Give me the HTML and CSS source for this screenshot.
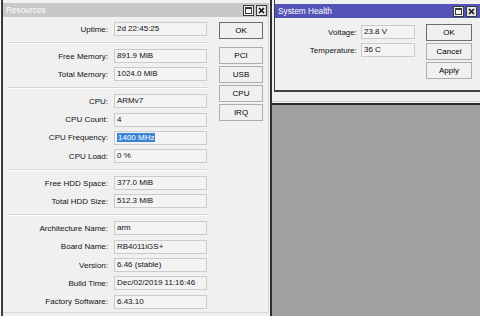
FILE: index.html
```html
<!DOCTYPE html>
<html>
<head>
<meta charset="utf-8">
<link rel="stylesheet" href="styles.css">
</head>
<body>
<div class="screen">
  <section class="win resources">
    <header class="titlebar inactive">
      <span class="title">Resources</span>
      <span class="ctrls">
        <svg class="cb" viewBox="0 0 11 11"><rect x=".5" y=".5" width="10" height="10" fill="#f4f4f4" stroke="#3a3a3a"/><rect x="2.5" y="2.5" width="6" height="6" fill="none" stroke="#3a3a3a"/><line x1="2" y1="3.5" x2="9" y2="3.5" stroke="#3a3a3a"/></svg>
        <svg class="cb" viewBox="0 0 11 11"><rect x=".5" y=".5" width="10" height="10" fill="#e6e6e6" stroke="#3a3a3a"/><path d="M3 3l5 5M8 3l-5 5" stroke="#111" stroke-width="1.6"/></svg>
      </span>
    </header>
    <div class="res-body">
      <div class="form">
        <div class="group">
          <div class="row"><label>Uptime:</label><span class="field">2d 22:45:25</span></div>
        </div>
        <div class="sep"></div>
        <div class="group">
          <div class="row"><label>Free Memory:</label><span class="field">891.9 MiB</span></div>
          <div class="row"><label>Total Memory:</label><span class="field">1024.0 MiB</span></div>
        </div>
        <div class="sep"></div>
        <div class="group">
          <div class="row"><label>CPU:</label><span class="field">ARMv7</span></div>
          <div class="row"><label>CPU Count:</label><span class="field">4</span></div>
          <div class="row"><label>CPU Frequency:</label><span class="field"><span class="sel">1400 MHz</span></span></div>
          <div class="row"><label>CPU Load:</label><span class="field">0 %</span></div>
        </div>
        <div class="sep"></div>
        <div class="group">
          <div class="row"><label>Free HDD Space:</label><span class="field">377.0 MiB</span></div>
          <div class="row"><label>Total HDD Size:</label><span class="field">512.3 MiB</span></div>
        </div>
        <div class="sep"></div>
        <div class="group">
          <div class="row"><label>Architecture Name:</label><span class="field">arm</span></div>
          <div class="row"><label>Board Name:</label><span class="field">RB4011iGS+</span></div>
          <div class="row"><label>Version:</label><span class="field">6.46 (stable)</span></div>
          <div class="row"><label>Build Time:</label><span class="field">Dec/02/2019 11:16:46</span></div>
          <div class="row"><label>Factory Software:</label><span class="field">6.43.10</span></div>
        </div>
      </div>
      <div class="buttons">
        <button class="btn default">OK</button>
        <button class="btn">PCI</button>
        <button class="btn">USB</button>
        <button class="btn">CPU</button>
        <button class="btn">IRQ</button>
      </div>
    </div>
  </section>
  <div class="mdi">
    <div class="mdi-top">
      <section class="win health">
        <header class="titlebar active">
          <span class="title">System Health</span>
          <span class="ctrls">
            <svg class="cb" viewBox="0 0 11 11"><rect x=".5" y=".5" width="10" height="10" fill="#f4f4f4" stroke="#3a3a3a"/><rect x="2.5" y="2.5" width="6" height="6" fill="none" stroke="#3a3a3a"/><line x1="2" y1="3.5" x2="9" y2="3.5" stroke="#3a3a3a"/></svg>
            <svg class="cb" viewBox="0 0 11 11"><rect x=".5" y=".5" width="10" height="10" fill="#e6e6e6" stroke="#3a3a3a"/><path d="M3 3l5 5M8 3l-5 5" stroke="#111" stroke-width="1.6"/></svg>
          </span>
        </header>
        <div class="health-body">
          <div class="hform">
            <div class="row"><label class="hl">Voltage:</label><span class="field hf">23.8 V</span></div>
            <div class="row"><label class="hl">Temperature:</label><span class="field hf">36 C</span></div>
          </div>
          <div class="buttons hbuttons">
            <button class="btn default">OK</button>
            <button class="btn">Cancel</button>
            <button class="btn">Apply</button>
          </div>
        </div>
      </section>
    </div>
  </div>
</div>
</body>
</html>
```

FILE: styles.css
```css
body {
  margin: 0;
  background: #fff;
  font-family: "Liberation Sans", Arial, sans-serif;
  font-size: 8px;
  color: #111;
}
.screen {
  display: flex;
  width: 480px;
  height: 316px;
  overflow: hidden;
}
.resources {
  box-sizing: border-box;
  width: 271px;
  margin-left: 1px;
  height: 316px;
  border-left: 2px solid #3a3a3a;
  border-right: 2px solid #2e2e2e;
  background: #f0f0f0;
  display: flex;
  flex-direction: column;
  padding-top: 3px;
  padding-right: 1px;
}
.titlebar {
  flex: none;
  height: 14px;
  display: flex;
  align-items: center;
  justify-content: space-between;
  padding-left: 3px;
  padding-right: 2px;
  color: #fff;
  font-size: 8.3px;
}
.titlebar.inactive { background: #c8c8c8; }
.titlebar.active { background: #5454b8; }
.ctrls { display: flex; gap: 2px; }
.cb { width: 11px; height: 11px; display: block; }

.res-body {
  flex: 1;
  display: flex;
  align-items: flex-start;
  padding: 5px 5px 0 0;
  border-right: 1px solid #d9d9d9;
  border-bottom: 1px solid #d9d9d9;
  margin-bottom: 3px;
}
.form {
  width: 204px;
  display: flex;
  flex-direction: column;
}
.group {
  display: flex;
  flex-direction: column;
  gap: 4.3px;
}
.row {
  display: flex;
  align-items: center;
  height: 14px;
  gap: 6px;
}
.row label {
  width: 105px;
  text-align: right;
  white-space: nowrap;
}
.field {
  box-sizing: border-box;
  width: 93px;
  height: 14px;
  border: 1px solid #cbcbcb;
  background: #f3f3f3;
  padding-left: 2px;
  line-height: 12px;
  white-space: nowrap;
  overflow: hidden;
}
.sel {
  background: #3d84d6;
  color: #fff;
  padding: 0 1px;
}
.sep {
  height: 0;
  border-top: 1px solid #d6d6d6;
  border-bottom: 1px solid #fff;
  margin: 6px -1px 5px 5px;
}
.buttons {
  margin-left: 12px;
  width: 44px;
  display: flex;
  flex-direction: column;
  gap: 2px;
}
.btn {
  box-sizing: border-box;
  height: 17px;
  border: 1px solid #adadad;
  background: #f0f0f0;
  font: inherit;
  color: #000;
  padding: 0;
}
.btn.default {
  border-color: #6c6c6c;
  margin-bottom: 6px;
}

.mdi {
  flex: 1;
  display: flex;
  flex-direction: column;
  background: #a0a0a0;
}
.mdi-top {
  height: 103px;
  background: #f0f0f0;
  border-bottom: 2px solid #2a2a2a;
  box-shadow: inset 0 -1px 0 #f0f0f0, inset 0 -2px 0 #d3d3d3;
}
.health {
  box-sizing: border-box;
  margin-left: 2px;
  height: 92px;
  border-left: 1px solid #3c3c3c;
  border-bottom: 2px solid #404040;
  padding-top: 4px;
  background: #f0f0f0;
  display: flex;
  flex-direction: column;
}
.health .titlebar { padding-right: 3px; }
.health-body {
  display: flex;
  align-items: flex-start;
  padding-top: 7px;
}
.hform {
  display: flex;
  flex-direction: column;
  gap: 4px;
}
.row .hl { width: 82px; }
.hform .row { gap: 4px; }
.field.hf { width: 54px; }
.hbuttons {
  margin-left: 11px;
  margin-top: -1px;
  width: 46px;
}
.hbuttons .btn.default { margin-bottom: 0; }
```
